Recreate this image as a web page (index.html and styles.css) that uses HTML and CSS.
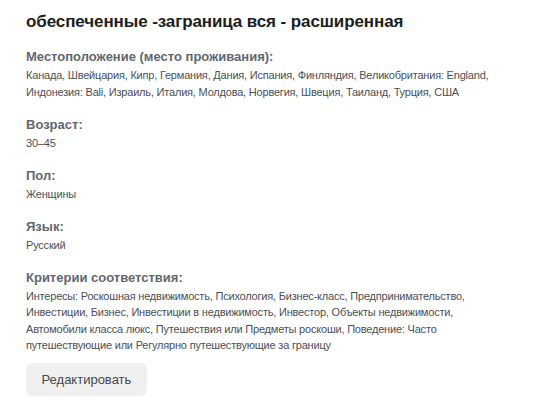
FILE: index.html
```html
<!DOCTYPE html>
<html lang="ru">
<head>
  <meta charset="UTF-8" />
  <title>Аудитория</title>
  <link rel="stylesheet" href="styles.css">
</head>
<body>
<div class="audience">
  <h2>обеспеченные -заграница вся - расширенная</h2>

  <div class="section">
    <div class="label">Местоположение (место проживания):</div>
    <div class="value">Канада, Швейцария, Кипр, Германия, Дания, Испания, Финляндия, Великобритания: England, Индонезия: Bali, Израиль, Италия, Молдова, Норвегия, Швеция, Таиланд, Турция, США</div>
  </div>

  <div class="section">
    <div class="label">Возраст:</div>
    <div class="value">30–45</div>
  </div>

  <div class="section">
    <div class="label">Пол:</div>
    <div class="value">Женщины</div>
  </div>

  <div class="section">
    <div class="label">Язык:</div>
    <div class="value">Русский</div>
  </div>

  <div class="section">
    <div class="label">Критерии соответствия:</div>
    <div class="value">Интересы: Роскошная недвижимость, Психология, Бизнес-класс, Предпринимательство, Инвестиции, Бизнес, Инвестиции в недвижимость, Инвестор, Объекты недвижимости, Автомобили класса люкс, Путешествия или Предметы роскоши, Поведение: Часто путешествующие или Регулярно путешествующие за границу</div>
  </div>

  <button class="edit">Редактировать</button>
</div>
</body>
</html>
```

FILE: styles.css
```css
body {
  margin: 0;
  background: #fff;
  font-family: "Liberation Sans", Arial, sans-serif;
}
.audience {
  padding: 11px 26px;
  width: 468px;
}
h2 {
  margin: 0 0 15px;
  font-size: 17px;
  font-weight: 700;
  letter-spacing: -0.1px;
  color: #1c1e21;
  line-height: 22px;
}
.section {
  margin-bottom: 15.5px;
}
.label {
  font-size: 13px;
  font-weight: 700;
  color: #606770;
  line-height: 18px;
  margin-bottom: 1px;
}
.value {
  font-size: 11px;
  letter-spacing: -0.2px;
  color: #4b4f56;
  line-height: 16.5px;
}
.edit {
  margin-top: -6px;
  background: #f0f0f0;
  border: none;
  border-radius: 6px;
  padding: 0 15.5px;
  height: 33px;
  font-family: inherit;
  font-size: 13px;
  color: #444950;
}
```
